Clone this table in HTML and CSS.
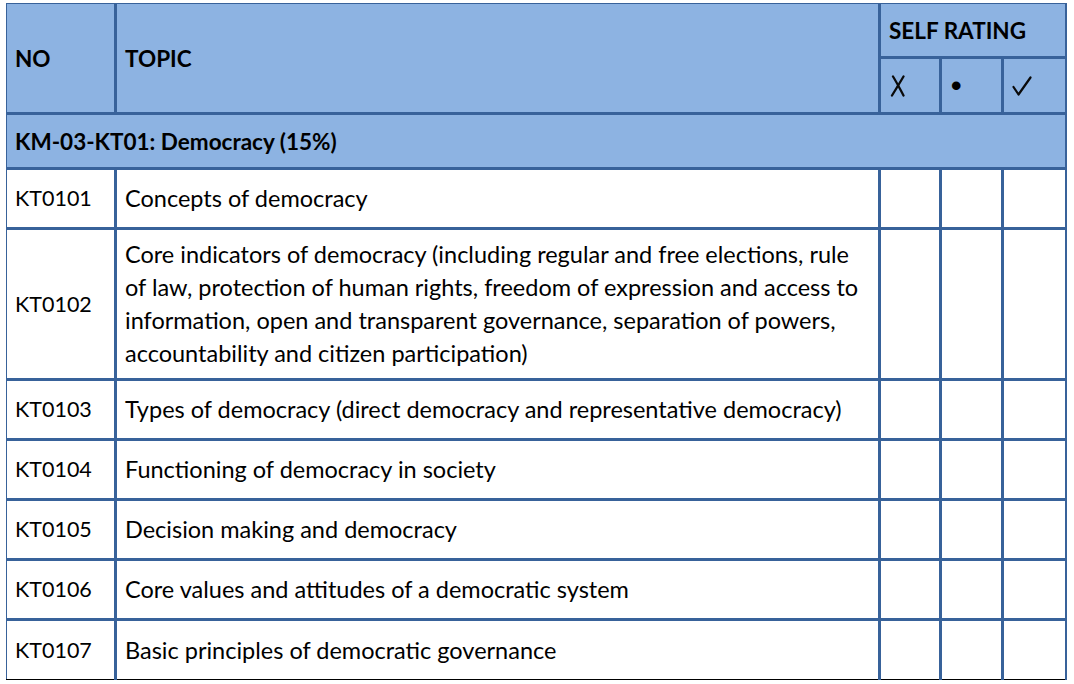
FILE: index.html
```html
<!DOCTYPE html>
<html>
<head>
<meta charset="utf-8">
<link rel="stylesheet" href="styles.css">
</head>
<body>
<table class="grid">
  <colgroup>
    <col class="c-no">
    <col class="c-topic">
    <col class="c-r1">
    <col class="c-r2">
    <col class="c-r3">
  </colgroup>
  <thead>
    <tr class="h1">
      <th rowspan="2" class="first">NO</th>
      <th rowspan="2">TOPIC</th>
      <th colspan="3" class="last">SELF RATING</th>
    </tr>
    <tr class="h2">
      <th class="sym"><svg class="ico ico-x" width="16" height="22" viewBox="0 0 16 22" aria-label="✗"><path d="M3 1.5 C6.5 7, 10 14, 13.5 20.5" /><path d="M13.5 1.5 C10 7.5, 6 14, 2 20.5" /></svg></th>
      <th class="sym dot">•</th>
      <th class="sym last"><svg class="ico ico-v" width="20" height="20" viewBox="0 0 20 20" aria-label="✓"><path d="M1.5 11 L6.5 18.5 L18.5 1.5" /></svg></th>
    </tr>
  </thead>
  <tbody>
    <tr class="section">
      <td colspan="5" class="first last">KM-03-KT01: Democracy (15%)</td>
    </tr>
    <tr class="row">
      <td class="first">KT0101</td><td class="topic">Concepts of democracy</td><td></td><td></td><td class="last"></td>
    </tr>
    <tr class="row">
      <td class="first">KT0102</td><td class="topic multi">Core indicators of democracy (including regular and free elections, rule of law, protection of human rights, freedom of expression and access to information, open and transparent governance, separation of powers, accountability and citizen participation)</td><td></td><td></td><td class="last"></td>
    </tr>
    <tr class="row">
      <td class="first">KT0103</td><td class="topic">Types of democracy (direct democracy and representative democracy)</td><td></td><td></td><td class="last"></td>
    </tr>
    <tr class="row">
      <td class="first">KT0104</td><td class="topic">Functioning of democracy in society</td><td></td><td></td><td class="last"></td>
    </tr>
    <tr class="row">
      <td class="first">KT0105</td><td class="topic">Decision making and democracy</td><td></td><td></td><td class="last"></td>
    </tr>
    <tr class="row">
      <td class="first">KT0106</td><td class="topic">Core values and attitudes of a democratic system</td><td></td><td></td><td class="last"></td>
    </tr>
    <tr class="row lastrow">
      <td class="first">KT0107</td><td class="topic">Basic principles of democratic governance</td><td></td><td></td><td class="last"></td>
    </tr>
  </tbody>
</table>
</body>
</html>
```

FILE: styles.css
```css
html, body {
  margin: 0;
  padding: 0;
  background: #ffffff;
}
body {
  padding: 3px 0 0 6px;
  font-family: Lato, "Liberation Sans", sans-serif;
  font-size: 21.5px;
  color: #000000;
}
.grid {
  border-collapse: collapse;
  table-layout: fixed;
  width: 1059px;
}
.c-no { width: 109px; }
.c-topic { width: 764px; }
.c-r1 { width: 61px; }
.c-r2 { width: 62px; }
.c-r3 { width: 63px; }

.grid th, .grid td {
  border: 3px solid #38629a;
  padding: 0 8px;
  text-align: left;
  vertical-align: middle;
  line-height: 33px;
}
.grid thead tr:first-child th {
  border-top-width: 1px;
}
.grid .first { border-left-width: 1px; }
.grid .last { border-right-width: 2px; }

.grid th {
  background: #8db3e2;
  font-weight: bold;
  font-size: 22.5px;
}
.h1 { height: 54px; }
.h2 { height: 56px; }
.sym {
  font-weight: normal;
}
.grid th.dot {
  font-family: "Liberation Sans", sans-serif;
  font-size: 30px;
  padding-left: 9px;
}
.ico {
  display: block;
  fill: none;
  stroke: #0a0a0a;
  stroke-linecap: round;
  stroke-linejoin: round;
}
.ico-x {
  stroke-width: 2.3;
  margin-left: 1px;
}
.ico-v {
  stroke-width: 2.2;
}

.section td {
  background: #8db3e2;
  font-weight: bold;
  font-size: 22.5px;
  height: 52px;
}
.row { height: 60px; }
.grid td.topic {
  font-size: 23.5px;
  padding-right: 10px;
}
.grid td.multi {
  padding-top: 8px;
  padding-bottom: 8px;
}
.lastrow td {
  border-bottom: 1px solid #000000;
}
```
